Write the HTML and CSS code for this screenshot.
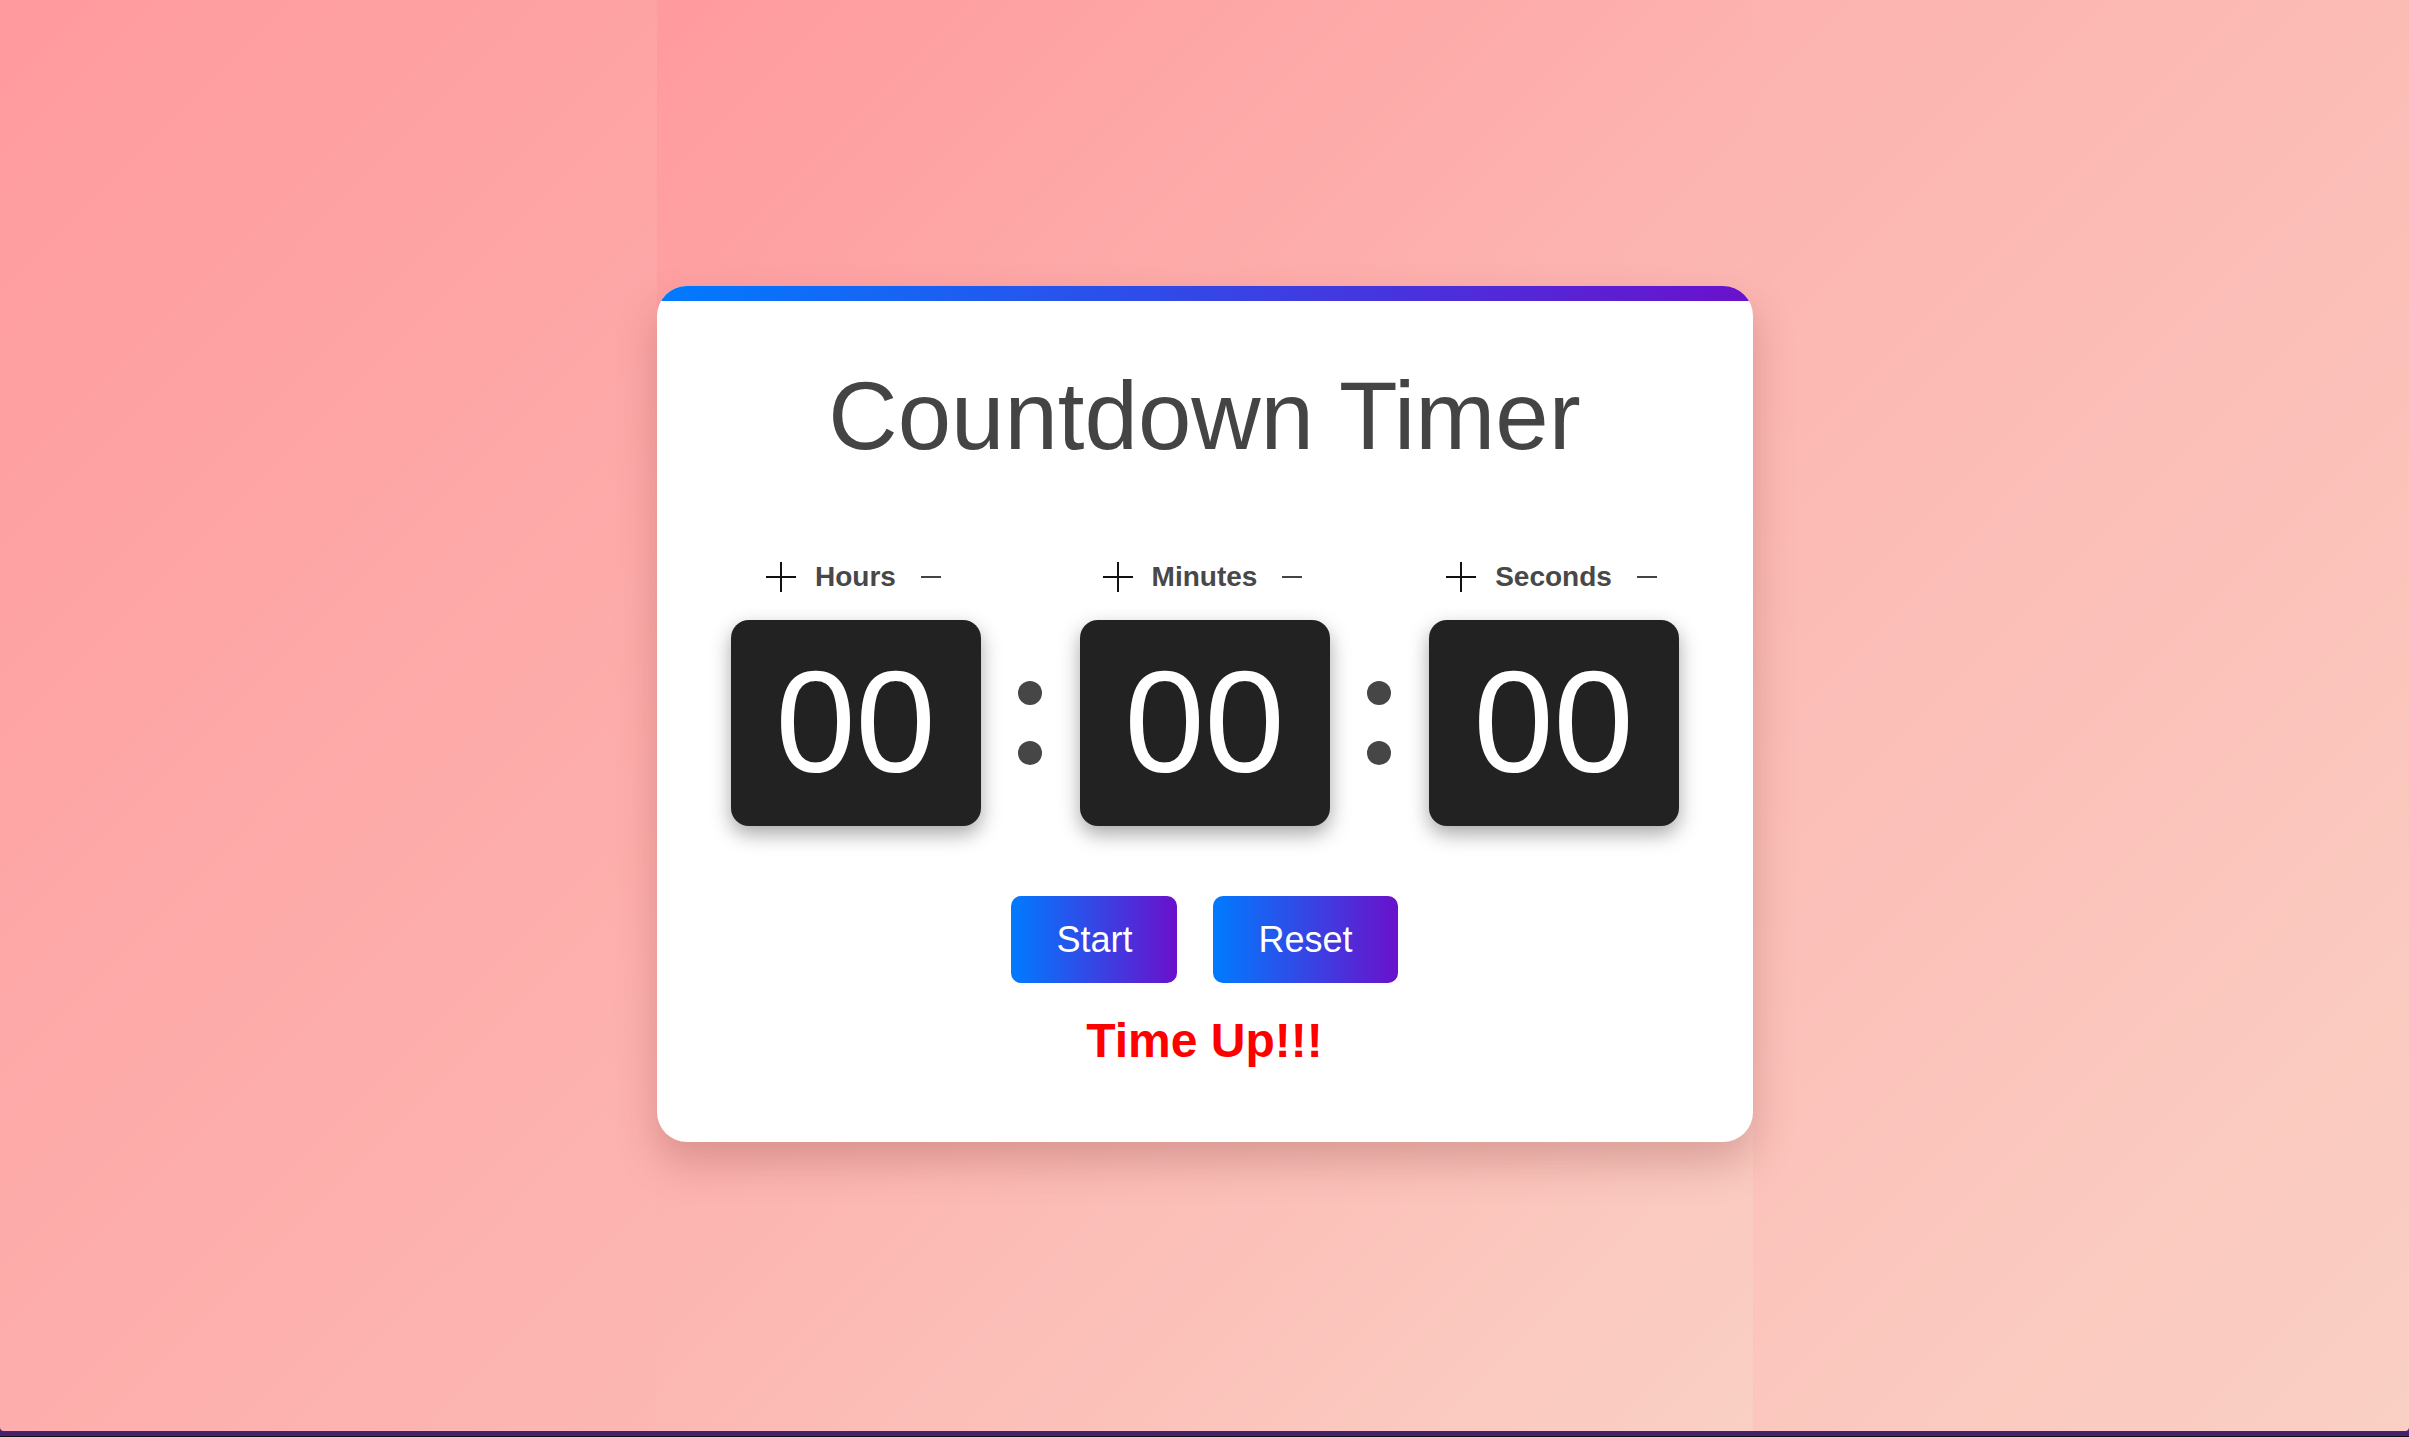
FILE: index.html
```html
<!DOCTYPE html>
<html lang="en">
<head>
<meta charset="utf-8">
<title>Countdown Timer</title>
<link rel="stylesheet" href="styles.css">
</head>
<body>
<main class="stage">
  <section class="card">
    <div class="card-bar"></div>
    <div class="card-body">
      <h1 class="title">Countdown Timer</h1>
      <div class="units">
        <div class="unit">
          <div class="unit-head">
            <button class="icon-btn plus" aria-label="Increase hours"><svg width="32" height="32" viewBox="0 0 32 32"><path d="M16 1V31M1 16H31" stroke="#111" stroke-width="2" fill="none"/></svg></button>
            <span class="unit-label">Hours</span>
            <button class="icon-btn minus" aria-label="Decrease hours"><svg width="20" height="4" viewBox="0 0 20 4"><path d="M0 2H20" stroke="#444" stroke-width="2" fill="none"/></svg></button>
          </div>
          <div class="digits">00</div>
        </div>
        <div class="sep"><span class="dot"></span><span class="dot"></span></div>
        <div class="unit">
          <div class="unit-head">
            <button class="icon-btn plus" aria-label="Increase minutes"><svg width="32" height="32" viewBox="0 0 32 32"><path d="M16 1V31M1 16H31" stroke="#111" stroke-width="2" fill="none"/></svg></button>
            <span class="unit-label">Minutes</span>
            <button class="icon-btn minus" aria-label="Decrease minutes"><svg width="20" height="4" viewBox="0 0 20 4"><path d="M0 2H20" stroke="#444" stroke-width="2" fill="none"/></svg></button>
          </div>
          <div class="digits">00</div>
        </div>
        <div class="sep"><span class="dot"></span><span class="dot"></span></div>
        <div class="unit">
          <div class="unit-head">
            <button class="icon-btn plus" aria-label="Increase seconds"><svg width="32" height="32" viewBox="0 0 32 32"><path d="M16 1V31M1 16H31" stroke="#111" stroke-width="2" fill="none"/></svg></button>
            <span class="unit-label">Seconds</span>
            <button class="icon-btn minus" aria-label="Decrease seconds"><svg width="20" height="4" viewBox="0 0 20 4"><path d="M0 2H20" stroke="#444" stroke-width="2" fill="none"/></svg></button>
          </div>
          <div class="digits">00</div>
        </div>
      </div>
      <div class="actions">
        <button class="btn">Start</button>
        <button class="btn">Reset</button>
      </div>
      <p class="status">Time Up!!!</p>
    </div>
  </section>
</main>
</body>
</html>
```
FILE: styles.css
```css
html {
  height: 100%;
  background: linear-gradient(#47216f calc(100% - 1px), #111 0);
}

body {
  margin: 0;
  height: calc(100vh - 6px);
  display: flex;
  justify-content: center;
  background: linear-gradient(135deg, #ff9a9e 0%, #fad0c4 100%);
  border-radius: 0 0 4px 4px;
  font-family: "Liberation Sans", Arial, sans-serif;
}

.stage {
  width: 1096px;
  box-sizing: border-box;
  padding-bottom: 3px;
  display: flex;
  align-items: center;
  background: linear-gradient(135deg, #ff9a9e 0%, #fad0c4 100%);
}

.card {
  width: 100%;
  background: #fff;
  border-radius: 30px;
  overflow: hidden;
  box-shadow: 0 20px 40px rgba(120, 40, 40, 0.25);
}

.card-bar {
  height: 15px;
  background: linear-gradient(90deg, #007bff, #6a11cb);
}

.card-body {
  padding: 60px 0 74px;
  text-align: center;
}

.title {
  margin: 0;
  font-size: 96px;
  line-height: 110px;
  font-weight: 400;
  color: #444;
}

.units {
  margin-top: 90px;
  display: flex;
  justify-content: center;
  align-items: flex-end;
}

.unit {
  width: 250px;
  display: flex;
  flex-direction: column;
  align-items: center;
}

.unit-head {
  height: 32px;
  display: flex;
  align-items: center;
  margin-bottom: 27px;
}

.icon-btn {
  border: 0;
  background: none;
  padding: 0;
  display: flex;
  align-items: center;
  cursor: pointer;
}

.plus {
  margin-right: 18px;
}

.minus {
  margin-left: 25px;
  margin-right: 5px;
}

.unit-label {
  font-size: 28px;
  line-height: 32px;
  font-weight: 700;
  color: #484848;
}

.digits {
  width: 250px;
  height: 206px;
  background: #222;
  border-radius: 18px;
  color: #fff;
  font-size: 144px;
  line-height: 206px;
  box-shadow: 0 8px 20px rgba(0, 0, 0, 0.35);
}

.sep {
  width: 99px;
  height: 206px;
  display: flex;
  flex-direction: column;
  justify-content: center;
  align-items: center;
  gap: 36px;
}

.dot {
  width: 24px;
  height: 24px;
  border-radius: 50%;
  background: #464646;
}

.actions {
  margin-top: 70px;
  display: flex;
  justify-content: center;
  gap: 36px;
}

.btn {
  font-family: inherit;
  font-size: 36px;
  line-height: 41px;
  padding: 23px 45px;
  border: 0;
  border-radius: 10px;
  color: #fff;
  background: linear-gradient(90deg, #007bff, #6a11cb);
  cursor: pointer;
}

.status {
  margin: 30px 0 0;
  font-size: 48px;
  line-height: 55px;
  font-weight: 700;
  color: #ff0000;
}
```
